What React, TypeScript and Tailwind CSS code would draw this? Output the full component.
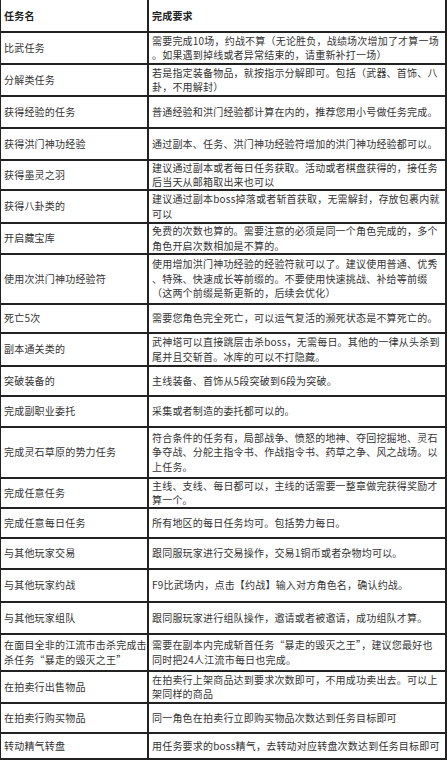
const rows: {name: string[]; req: string[]; h: string}[] = [
  {
    name: ['比武任务'],
    req: ['需要完成10场，约战不算（无论胜负，战绩场次增加了才算一场', '。如果遇到掉线或者异常结束的，请重新补打一场）'],
    h: 'h-[32px]',
  },
  {
    name: ['分解类任务'],
    req: ['若是指定装备物品，就按指示分解即可。包括（武器、首饰、八', '卦，不用解封）'],
    h: 'h-[32px]',
  },
  {
    name: ['获得经验的任务'],
    req: ['普通经验和洪门经验都计算在内的，推荐您用小号做任务完成。'],
    h: 'h-[32px]',
  },
  {
    name: ['获得洪门神功经验'],
    req: ['通过副本、任务、洪门神功经验符增加的洪门神功经验都可以。'],
    h: 'h-[32px]',
  },
  {
    name: ['获得墨灵之羽'],
    req: ['建议通过副本或者每日任务获取。活动或者棋盘获得的，接任务', '后当天从邮箱取出来也可以'],
    h: 'h-[30px]',
  },
  {
    name: ['获得八卦类的'],
    req: ['建议通过副本boss掉落或者斩首获取，无需解封，存放包裹内就', '可以'],
    h: 'h-[33px]',
  },
  {
    name: ['开启藏宝库'],
    req: ['免费的次数也算的。需要注意的必须是同一个角色完成的，多个', '角色开启次数相加是不算的。'],
    h: 'h-[31px]',
  },
  {
    name: ['使用次洪门神功经验符'],
    req: [
      '使用增加洪门神功经验的经验符就可以了。建议使用普通、优秀',
      '、特殊、快速成长等前缀的。不要使用快速挑战、补给等前缀',
      '（这两个前缀是新更新的，后续会优化）',
    ],
    h: 'h-[50px]',
  },
  {
    name: ['死亡5次'],
    req: ['需要您角色完全死亡，可以运气复活的濒死状态是不算死亡的。'],
    h: 'h-[29px]',
  },
  {
    name: ['副本通关类的'],
    req: ['武神塔可以直接跳层击杀boss，无需每日。其他的一律从头杀到', '尾并且交斩首。冰库的可以不打隐藏。'],
    h: 'h-[33px]',
  },
  {
    name: ['突破装备的'],
    req: ['主线装备、首饰从5段突破到6段为突破。'],
    h: 'h-[30px]',
  },
  {
    name: ['完成副职业委托'],
    req: ['采集或者制造的委托都可以的。'],
    h: 'h-[31px]',
  },
  {
    name: ['完成灵石草原的势力任务'],
    req: [
      '符合条件的任务有，局部战争、愤怒的地神、夺回挖掘地、灵石',
      '争夺战、分舵主指令书、作战指令书、药草之争、风之战场。以',
      '上任务。',
    ],
    h: 'h-[51px]',
  },
  {
    name: ['完成任意任务'],
    req: ['主线、支线、每日都可以，主线的话需要一整章做完获得奖励才', '算一个。'],
    h: 'h-[30px]',
  },
  {
    name: ['完成任意每日任务'],
    req: ['所有地区的每日任务均可。包括势力每日。'],
    h: 'h-[30px]',
  },
  {
    name: ['与其他玩家交易'],
    req: ['跟同服玩家进行交易操作，交易1铜币或者杂物均可以。'],
    h: 'h-[31px]',
  },
  {
    name: ['与其他玩家约战'],
    req: ['F9比武场内，点击【约战】输入对方角色名，确认约战。'],
    h: 'h-[33px]',
  },
  {
    name: ['与其他玩家组队'],
    req: ['跟同服玩家进行组队操作，邀请或者被邀请，成功组队才算。'],
    h: 'h-[32px]',
  },
  {
    name: ['在面目全非的江流市击杀完成击', '杀任务“暴走的毁灭之王”'],
    req: ['需要在副本内完成斩首任务“暴走的毁灭之王”，建议您最好也', '同时把24人江流市每日也完成。'],
    h: 'h-[37px]',
  },
  {
    name: ['在拍卖行出售物品'],
    req: ['在拍卖行上架商品达到要求次数即可，不用成功卖出去。可以上', '架同样的商品'],
    h: 'h-[32px]',
  },
  {
    name: ['在拍卖行购买物品'],
    req: ['同一角色在拍卖行立即购买物品次数达到任务目标即可'],
    h: 'h-[30px]',
  },
  {
    name: ['转动精气转盘'],
    req: ['用任务要求的boss精气，去转动对应转盘次数达到任务目标即可'],
    h: 'h-[26px]',
  },
];

// one span per printed line, so the wraps match the screenshot
function Lines({lines}: {lines: string[]}) {
  return (
    <div className="flex flex-col leading-[14.5px] whitespace-nowrap">
      {lines.map((l, i) => (
        <span key={i}>{l}</span>
      ))}
    </div>
  );
}

export default function App() {
  return (
    <div
      className="w-[447px] h-[760px] overflow-hidden bg-white text-[10px] tracking-[0.2px] text-[#333] border-l border-r-2 border-[#222]"
      style={{fontFamily: '"Noto Sans CJK SC", "Noto Sans", sans-serif'}}
    >
      {/* header */}
      <div className="flex h-[33px] border-b-2 border-[#222] font-bold text-[#222]">
        <div className="w-[148px] flex items-center pl-[3px] border-r-2 border-[#222]">任务名</div>
        <div className="flex-1 flex items-center pl-[3px]">完成要求</div>
      </div>

      {rows.map((r, i) => (
        <div key={i} className={`flex border-b-2 border-[#222] ${r.h}`}>
          <div className="w-[148px] flex items-center pl-[3px] border-r-2 border-[#222]">
            <Lines lines={r.name} />
          </div>
          <div className="flex-1 flex items-center pl-[3px]">
            <Lines lines={r.req} />
          </div>
        </div>
      ))}
    </div>
  );
}
